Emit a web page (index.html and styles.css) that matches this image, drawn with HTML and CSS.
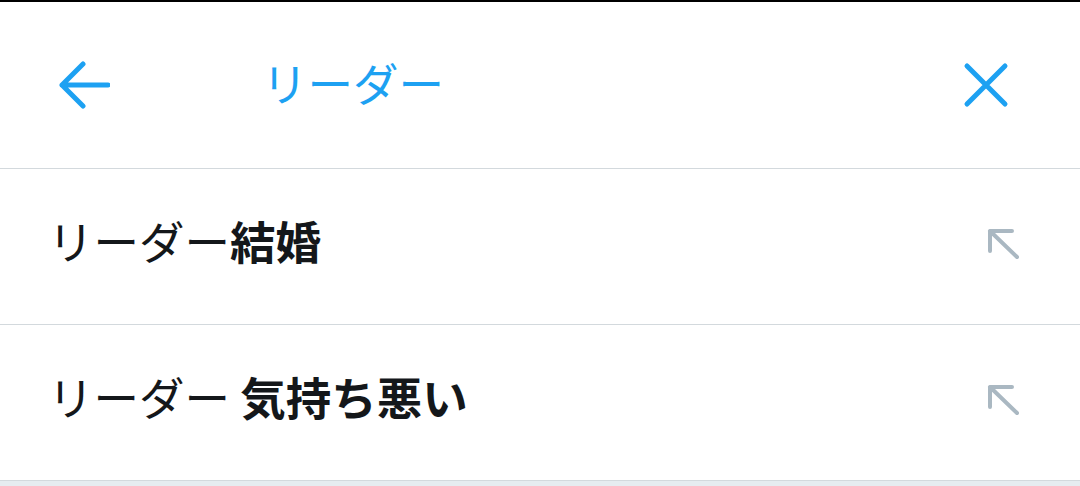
FILE: index.html
```html
<!DOCTYPE html>
<html lang="ja">
<head>
<meta charset="utf-8">
<link rel="stylesheet" href="styles.css">
</head>
<body>
<div class="page">
  <header class="topbar">
    <button class="icon-btn back" aria-label="戻る">
      <svg width="52" height="50" viewBox="0 0 52 50"><path d="M50 25H4M25 4L4 25L25 46" fill="none" stroke="#1da1f2" stroke-width="5" stroke-linecap="round" stroke-linejoin="round"/></svg>
    </button>
    <div class="title">リーダー</div>
    <button class="icon-btn close" aria-label="閉じる">
      <svg width="46" height="46" viewBox="0 0 46 46"><path d="M4 4L42 42M42 4L4 42" fill="none" stroke="#1da1f2" stroke-width="5" stroke-linecap="round"/></svg>
    </button>
  </header>
  <ul class="suggestions">
    <li class="item">
      <span class="text">リーダー<b>結婚</b></span>
      <svg class="fill-icon" width="36" height="36" viewBox="0 0 36 36"><path d="M4 4L31 30M4 4H26M4 4V24" fill="none" stroke="#aab8c2" stroke-width="4" stroke-linecap="round" stroke-linejoin="round"/></svg>
    </li>
    <li class="item">
      <span class="text">リーダー <b>気持ち悪い</b></span>
      <svg class="fill-icon" width="36" height="36" viewBox="0 0 36 36"><path d="M4 4L31 30M4 4H26M4 4V24" fill="none" stroke="#aab8c2" stroke-width="4" stroke-linecap="round" stroke-linejoin="round"/></svg>
    </li>
  </ul>
  <div class="rest"></div>
</div>
</body>
</html>
```
FILE: styles.css
```css
html, body {
  margin: 0;
  padding: 0;
  background: #e6ecf0;
}
.page {
  width: 1080px;
  height: 486px;
  display: flex;
  flex-direction: column;
  font-family: "Noto Sans CJK JP", "Noto Sans", sans-serif;
  background: #e6ecf0;
  overflow: hidden;
}
.topbar {
  height: 166px;
  flex: none;
  border-top: 2px solid #000;
  border-bottom: 1px solid #d3d9dd;
  background: #fff;
  display: flex;
  align-items: center;
  box-sizing: content-box;
}
.icon-btn {
  border: 0;
  background: none;
  padding: 0;
  display: flex;
}
.back {
  margin-left: 58px;
}
.title {
  margin-left: 152px;
  color: #1da1f2;
  font-size: 45.5px;
  line-height: 1;
  flex: 1;
  margin-top: -4px;
}
.close {
  margin-right: 71px;
}
.suggestions {
  list-style: none;
  margin: 0;
  padding: 0;
  background: #fff;
  flex: none;
}
.item {
  height: 155px;
  border-bottom: 1px solid #d3d9dd;
  display: flex;
  align-items: center;
  justify-content: space-between;
  padding: 0 58px 0 48px;
}
.text {
  font-size: 45.5px;
  color: #14171a;
  line-height: 1;
  margin-top: -12px;
}
.text b {
  font-weight: 700;
}
.fill-icon {
  margin-top: -4px;
}
.rest {
  flex: 1;
  background: #e6ecf0;
}
```
